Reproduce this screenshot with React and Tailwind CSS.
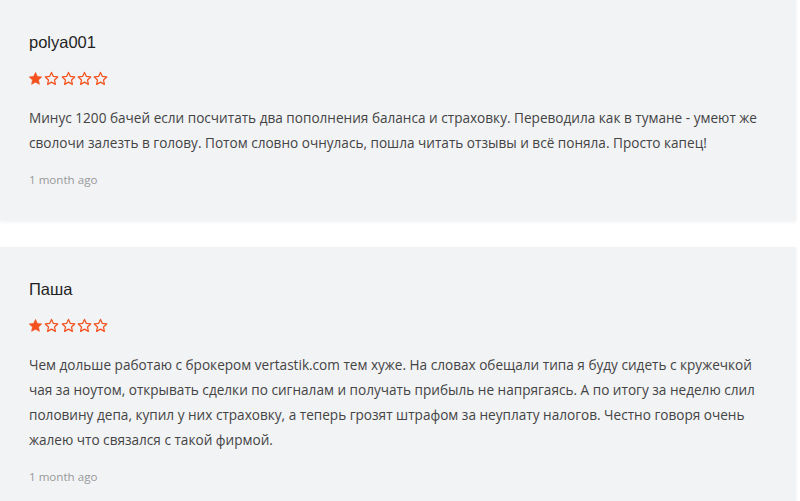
import { useState } from "react";

const reviews = [
  {
    id: 1,
    name: "polya001",
    rating: 1,
    text: "Минус 1200 бачей если посчитать два пополнения баланса и страховку. Переводила как в тумане - умеют же сволочи залезть в голову. Потом словно очнулась, пошла читать отзывы и всё поняла. Просто капец!",
    date: "1 month ago",
  },
  {
    id: 2,
    name: "Паша",
    rating: 1,
    text: "Чем дольше работаю с брокером vertastik.com тем хуже. На словах обещали типа я буду сидеть с кружечкой чая за ноутом, открывать сделки по сигналам и получать прибыль не напрягаясь. А по итогу за неделю слил половину депа, купил у них страховку, а теперь грозят штрафом за неуплату налогов. Честно говоря очень жалею что связался с такой фирмой.",
    date: "1 month ago",
  },
];

const Star = ({ filled }) => (
  <svg width="13" height="13" viewBox="2 2 20 20" className="shrink-0 overflow-visible">
    <polygon
      points="12,2.6 14.9,8.9 21.6,9.6 16.6,14.3 18,21 12,17.6 6,21 7.4,14.3 2.4,9.6 9.1,8.9"
      fill={filled ? "#f4511e" : "none"}
      stroke="#f4511e"
      strokeWidth={filled ? 1 : 1.9}
      strokeLinejoin="round"
    />
  </svg>
);

const ReviewCard = ({ review }) => (
  <div className="bg-[#f2f3f5] pl-[29px] pr-[28px] pt-[30px] pb-[33px] shadow-[0_1px_4px_rgba(0,0,0,0.06)]">
    <h3 className="text-[16.5px] leading-[24px] text-[#1f1f1f] font-['Liberation_Sans',Arial,sans-serif]">
      {review.name}
    </h3>
    <div className="mt-[18px] flex gap-[3.25px]">
      {[1, 2, 3, 4, 5].map((i) => (
        <Star key={i} filled={i <= review.rating} />
      ))}
    </div>
    <p className="mt-[20px] text-[13.6px] leading-[25px] text-[#444] font-['Open_Sans',sans-serif]">
      {review.text}
    </p>
    <div className="mt-[17px] text-[11.6px] leading-[16px] text-[#999] font-['Open_Sans',sans-serif]">
      {review.date}
    </div>
  </div>
);

export default function App() {
  const [items] = useState(reviews);
  return (
    <div className="w-[796px] bg-white flex flex-col gap-[26px]">
      {items.map((r) => (
        <ReviewCard key={r.id} review={r} />
      ))}
    </div>
  );
}
